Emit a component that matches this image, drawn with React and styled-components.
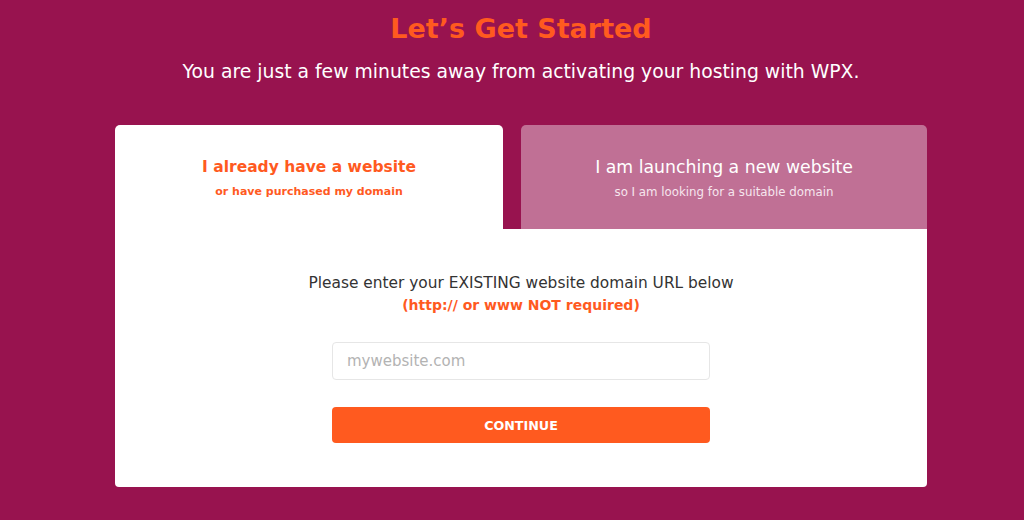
import styled, { createGlobalStyle } from "styled-components";

const GlobalStyle = createGlobalStyle`
  body {
    margin: 0;
    background: #98134f;
    font-family: "DejaVu Sans", "Open Sans", sans-serif;
  }
`;

const App = () => {
  return (
    <>
      <GlobalStyle />
      <Page>
        <Title>Let’s Get Started</Title>
        <Subtitle>
          You are just a few minutes away from activating your hosting with WPX.
        </Subtitle>
        <Card>
          <Tabs>
            <Tab active>
              <TabTitle active>I already have a website</TabTitle>
              <TabNote active>or have purchased my domain</TabNote>
            </Tab>
            <Tab>
              <TabTitle>I am launching a new website</TabTitle>
              <TabNote>so I am looking for a suitable domain</TabNote>
            </Tab>
          </Tabs>
          <Panel>
            <Prompt>Please enter your EXISTING website domain URL below</Prompt>
            <Hint>(http:// or www NOT required)</Hint>
            <Form>
              <Input type="text" placeholder="mywebsite.com" />
              <Button type="button">CONTINUE</Button>
            </Form>
          </Panel>
        </Card>
      </Page>
    </>
  );
};

const Page = styled.div`
  width: 1024px;
  height: 520px;
  display: flex;
  flex-direction: column;
  align-items: center;
  padding: 12px 0 0 18px;
  box-sizing: border-box;
`;

const Title = styled.h1`
  margin: 0;
  color: #ff5a1f;
  font-size: 27px;
  font-weight: 600;
  line-height: 34px;
`;

const Subtitle = styled.p`
  margin: 14px 0 0;
  color: #fff;
  font-size: 18.8px;
  line-height: 24px;
`;

const Card = styled.div`
  margin-top: 41px;
  width: 812px;
  display: flex;
  flex-direction: column;
`;

const Tabs = styled.div`
  display: flex;
  gap: 18px;
`;

const Tab = styled.div`
  flex: ${(p) => (p.active ? "0 0 388px" : "1")};
  height: 104px;
  border-radius: 5px 5px 0 0;
  background: ${(p) => (p.active ? "#fff" : "#c07095")};
  display: flex;
  flex-direction: column;
  align-items: center;
  padding-top: 31px;
  box-sizing: border-box;
`;

const TabTitle = styled.div`
  font-size: ${(p) => (p.active ? "15.5px" : "17.3px")};
  line-height: 22px;
  font-weight: ${(p) => (p.active ? 600 : 400)};
  color: ${(p) => (p.active ? "#ff5a1f" : "#fff")};
`;

const TabNote = styled.div`
  margin-top: 6px;
  font-size: ${(p) => (p.active ? "11px" : "11.8px")};
  line-height: 16px;
  font-weight: ${(p) => (p.active ? 600 : 400)};
  color: ${(p) => (p.active ? "#ff5a1f" : "#f6e6ee")};
`;

const Panel = styled.div`
  background: #fff;
  height: 258px;
  border-radius: 0 0 4px 4px;
  display: flex;
  flex-direction: column;
  align-items: center;
  padding-top: 44px;
  box-sizing: border-box;
`;

const Prompt = styled.div`
  font-size: 15.4px;
  line-height: 21px;
  color: #333;
`;

const Hint = styled.div`
  margin-top: 1px;
  font-size: 14px;
  line-height: 20px;
  font-weight: 700;
  color: #ff5a1f;
`;

const Form = styled.div`
  margin-top: 27px;
  width: 378px;
  display: flex;
  flex-direction: column;
  gap: 27px;
`;

const Input = styled.input`
  height: 38px;
  border: 1px solid #e6e6e6;
  border-radius: 4px;
  padding: 0 14px;
  font-family: inherit;
  font-size: 15px;
  color: #333;
  box-sizing: border-box;
  &::placeholder {
    color: #b3b3b3;
  }
`;

const Button = styled.button`
  height: 36px;
  border: none;
  border-radius: 4px;
  background: #ff5a1f;
  color: #fff;
  font-family: inherit;
  font-size: 12.7px;
  font-weight: 700;
  cursor: pointer;
`;

export default App;
